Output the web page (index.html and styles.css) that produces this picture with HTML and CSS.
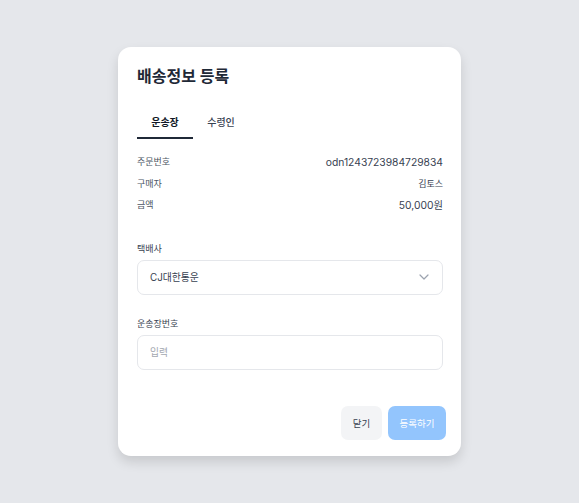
FILE: index.html
```html
<!DOCTYPE html>
<html lang="ko">
<head>
<meta charset="utf-8">
<link rel="stylesheet" href="styles.css">
</head>
<body>
<div class="modal">
  <h1 class="title">배송정보 등록</h1>
  <div class="tabs">
    <div class="tab active">운송장</div>
    <div class="tab">수령인</div>
  </div>
  <div class="info">
    <div class="row"><span class="label">주문번호</span><span class="value num">odn1243723984729834</span></div>
    <div class="row"><span class="label">구매자</span><span class="value">김토스</span></div>
    <div class="row"><span class="label">금액</span><span class="value num">50,000원</span></div>
  </div>
  <div class="field first">
    <div class="field-label">택배사</div>
    <div class="select">
      <span>CJ대한통운</span>
      <svg class="chev" width="10" height="6" viewBox="0 0 10 6"><path d="M1 1l4 4 4-4" fill="none" stroke="#9ca3af" stroke-width="1.2" stroke-linecap="round" stroke-linejoin="round"/></svg>
    </div>
  </div>
  <div class="field">
    <div class="field-label">운송장번호</div>
    <div class="input"><span class="placeholder">입력</span></div>
  </div>
  <div class="footer">
    <button class="btn btn-close">닫기</button>
    <button class="btn btn-primary">등록하기</button>
  </div>
</div>
</body>
</html>
```
FILE: styles.css
```css
* { box-sizing: border-box; }
html, body { margin: 0; padding: 0; }
body {
  background: #e5e7eb;
  min-height: 100vh;
  display: flex;
  align-items: center;
  justify-content: center;
  font-family: Inter, "Noto Sans CJK KR", sans-serif;
  color: #374151;
}
.modal {
  width: 343px;
  height: 409px;
  background: #fff;
  border-radius: 13px;
  box-shadow: 0 6px 12px rgba(0,0,0,0.13);
  padding: 16px 18px 16px 19px;
  display: flex;
  flex-direction: column;
}
.title {
  margin: 0;
  font-size: 16px;
  line-height: 26px;
  font-weight: 700;
  color: #1f2937;
}
.tabs {
  display: flex;
  margin-top: 14px;
}
.tab {
  width: 56px;
  text-align: center;
  font-size: 10px;
  line-height: 20px;
  padding: 9px 0 5px;
  border-bottom: 2px solid transparent;
  color: #374151;
  font-weight: 500;
}
.tab.active {
  border-bottom-color: #1f2937;
  color: #111827;
  font-weight: 700;
}
.info { margin-top: 12px; }
.row {
  display: flex;
  justify-content: space-between;
  align-items: center;
  height: 21.5px;
  font-size: 9px;
}
.label { color: #4b5563; }
.value { color: #374151; }
.num { font-size: 10.3px; }
.field { display: flex; flex-direction: column; }
.field.first { margin-top: 25px; }
.field + .field { margin-top: 21px; }
.field-label {
  font-size: 9px;
  line-height: 16px;
  color: #374151;
  margin-bottom: 3px;
}
.select, .input {
  height: 35px;
  border: 1px solid #e5e7eb;
  border-radius: 7px;
  padding: 0 12px;
  display: flex;
  align-items: center;
  justify-content: space-between;
  font-size: 9.8px;
  color: #374151;
}
.chev { margin-right: 1px; }
.placeholder { color: #a3a8b0; }
.footer {
  margin-top: auto;
  margin-right: -3px;
  display: flex;
  justify-content: flex-end;
  gap: 6px;
}
.btn {
  border: none;
  height: 34px;
  border-radius: 7px;
  font-family: inherit;
  font-size: 9.5px;
  padding: 0;
}
.btn-close { width: 41px; background: #f3f4f6; color: #374151; }
.btn-primary { width: 58px; background: #93c5fd; color: #fff; }
```
